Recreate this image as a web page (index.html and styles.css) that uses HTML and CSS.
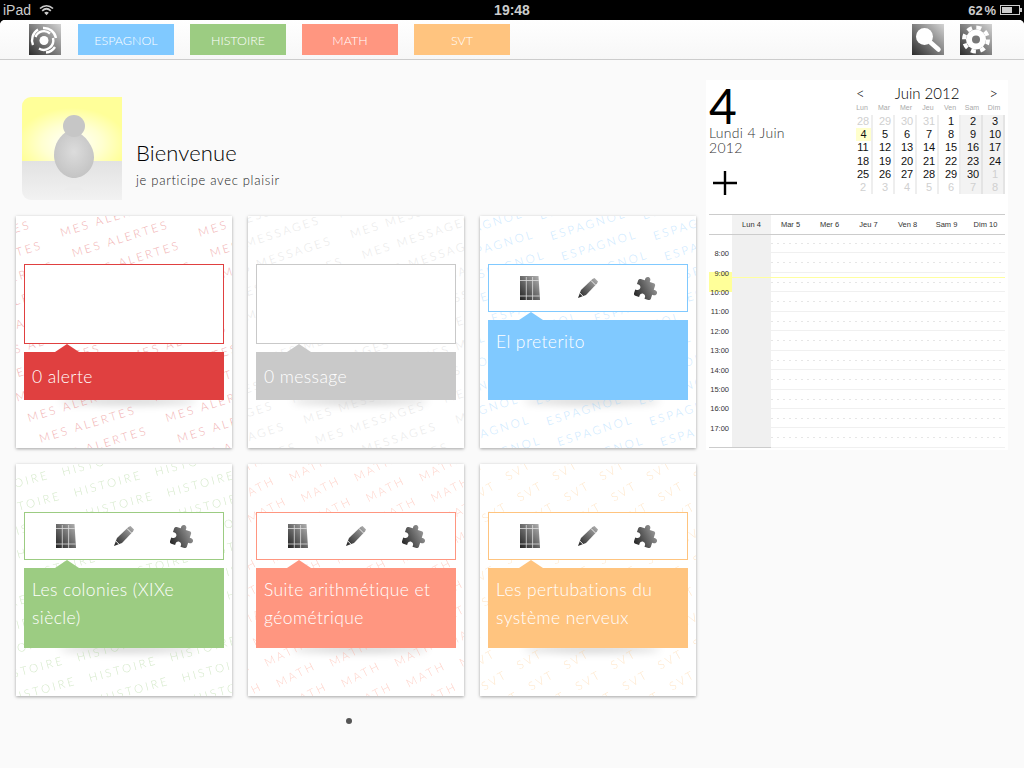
FILE: index.html
```html
<!doctype html>
<html lang="fr">
<head>
    <meta charset="UTF-8">
    <title>Bienvenue</title>
    <link rel="stylesheet" href="styles.css">
</head>
<body>
    <svg class="defs" width="0" height="0">
        <defs>
            <linearGradient id="dk" x1="0" y1="1" x2="1" y2="0">
                <stop offset="0" stop-color="#222"/>
                <stop offset="1" stop-color="#b4b4b4"/>
            </linearGradient>
            <symbol id="i-table" viewBox="0 0 20 24">
                <path d="M0 0H18.5L20 24H0Z" fill="url(#dk)"/>
                <path d="M0 4.5H18.8M0 20H19.7M6.3 1V24M12.6 1V24" stroke="#ddd" stroke-width=".8" fill="none"/>
            </symbol>
            <symbol id="i-pen" viewBox="0 0 20 20">
                <path d="M0 20L3 12L14.5 1L16.5 0L20 3.5L19 5.5L8 17Z" fill="url(#dk)"/>
                <path d="M13 2.5L17.5 7M1.8 15L5 18.2" stroke="#eee" stroke-width="1" fill="none"/>
            </symbol>
            <symbol id="i-puzzle" viewBox="0 0 24 24">
                <path transform="rotate(18 12 12)" d="M20.5 11H19V7c0-1.1-.9-2-2-2h-4V3.5C13 2.12 11.88 1 10.5 1S8 2.12 8 3.5V5H4c-1.1 0-1.99.9-1.99 2v3.8H3.5c1.49 0 2.7 1.21 2.7 2.7s-1.21 2.7-2.7 2.7H2V20c0 1.1.9 2 2 2h3.8v-1.5c0-1.49 1.21-2.7 2.7-2.7 1.49 0 2.7 1.21 2.7 2.7V22H17c1.1 0 2-.9 2-2v-4h1.5c1.38 0 2.5-1.12 2.5-2.5S21.88 11 20.5 11z" fill="url(#dk)"/>
            </symbol>
        </defs>
    </svg>

    <div class="status">
        <div class="status-left">
            <span>iPad</span>
            <svg width="15" height="12" viewBox="0 0 15 12"><path d="M1 4.5C5 .8 10 .8 14 4.5M3.2 6.8C5.8 4.3 9.2 4.3 11.8 6.8" fill="none" stroke="#ccc" stroke-width="1.7"/><path d="M5.2 8.8C6.5 7.5 8.5 7.5 9.8 8.8L7.5 11.3Z" fill="#ccc"/></svg>
        </div>
        <div class="status-time">19:48</div>
        <div class="status-right">
            <span>62 %</span>
            <div class="battery"><div class="battery-level"></div></div>
        </div>
    </div>

    <div class="screen">
        <div class="toolbar">
            <div class="tool">
                <svg width="32" height="31" viewBox="0 0 32 31"><circle cx="15" cy="16.5" r="4.5" fill="#fff"/><g fill="none" stroke="#fff" stroke-width="2.4"><path d="M6.5 13A9 9 0 0 1 21 9.5"/><path d="M24 14A9.5 9.5 0 0 1 10 24.5"/><path d="M4 21A12.5 12.5 0 0 1 9 5.5"/><path d="M14 4A12.5 12.5 0 0 1 27 14"/><path d="M26 23A12.5 12.5 0 0 1 17 28.5"/></g></svg>
            </div>
            <div class="tabs">
                <div class="tab espagnol">ESPAGNOL</div>
                <div class="tab histoire">HISTOIRE</div>
                <div class="tab math">MATH</div>
                <div class="tab svt">SVT</div>
            </div>
            <div class="tools-right">
                <div class="tool">
                    <svg width="32" height="31" viewBox="0 0 32 31"><circle cx="12.5" cy="12.5" r="8.5" fill="#fff"/><path d="M18 18L26.5 25.5" stroke="#fff" stroke-width="4.5" stroke-linecap="round"/></svg>
                </div>
                <div class="tool">
                    <svg width="32" height="31" viewBox="0 0 32 31"><circle cx="16" cy="15.5" r="10" fill="#fff"/><circle cx="16" cy="15.5" r="12" fill="none" stroke="#fff" stroke-width="4" stroke-dasharray="5 4.42"/><circle cx="16" cy="15.5" r="4" fill="#777"/></svg>
                </div>
            </div>
        </div>

        <div class="main">
            <div class="left">
                <div class="profile">
                    <div class="avatar">
                        <svg width="100" height="103" viewBox="0 0 100 103">
                            <defs>
                                <radialGradient id="glow" cx=".5" cy=".72" r=".55">
                                    <stop offset="0" stop-color="#fff"/>
                                    <stop offset=".55" stop-color="#ffffd0"/>
                                    <stop offset="1" stop-color="#ffff99"/>
                                </radialGradient>
                                <linearGradient id="floor" x1="0" y1="0" x2="0" y2="1">
                                    <stop offset="0" stop-color="#e2e2e2"/>
                                    <stop offset="1" stop-color="#f2f2f2"/>
                                </linearGradient>
                                <radialGradient id="egg" cx=".5" cy=".45" r=".6">
                                    <stop offset="0" stop-color="#dcdcdc"/>
                                    <stop offset="1" stop-color="#c2c2c2"/>
                                </radialGradient>
                            </defs>
                            <rect width="100" height="64" fill="url(#glow)"/>
                            <rect y="64" width="100" height="39" fill="url(#floor)"/>
                            <path d="M52 33C64 38 72 50 72 60C72 72 62 81 52 81C42 81 32 71 32 58C32 47 38 38 47 33Z" fill="url(#egg)"/>
                            <circle cx="52" cy="29" r="11" fill="#c6c6c6"/>
                            <path d="M42 93C46 90 50 86 52 86C54 86 58 90 62 93Z" fill="#ececec"/>
                        </svg>
                    </div>
                    <div class="hello">
                        <div class="hello-title">Bienvenue</div>
                        <div class="hello-sub">je participe avec plaisir</div>
                    </div>
                </div>

                <div class="cards">
                    <div class="card alerte">
                        <svg class="wm" data-word="MES ALERTES" data-angle="-17" data-ox="45.7" data-oy="20.7" data-ax="138" data-bx="11.7" data-by="20.6"></svg>
                        <div class="box box-tall"></div>
                        <div class="label label-short">0 alerte</div>
                    </div>
                    <div class="card message">
                        <svg class="wm" data-word="MES MESSAGES" data-angle="-18" data-ox="103.7" data-oy="22.3" data-ax="152" data-bx="11.7" data-by="20.6"></svg>
                        <div class="box box-tall"></div>
                        <div class="label label-short">0 message</div>
                    </div>
                    <div class="card espagnol">
                        <svg class="wm" data-word="ESPAGNOL" data-angle="-17" data-ox="71.7" data-oy="24" data-ax="103" data-bx="11" data-by="20.6"></svg>
                        <div class="box">
                            <svg class="ico" width="20" height="24"><use href="#i-table"/></svg>
                            <svg class="ico" width="20" height="20"><use href="#i-pen"/></svg>
                            <svg class="ico" width="25" height="25"><use href="#i-puzzle"/></svg>
                        </div>
                        <div class="label">El preterito</div>
                    </div>
                    <div class="card histoire">
                        <svg class="wm" data-word="HISTOIRE" data-angle="-15" data-ox="59" data-oy="32.7" data-ax="93" data-bx="12" data-by="20.6"></svg>
                        <div class="box">
                            <svg class="ico" width="20" height="24"><use href="#i-table"/></svg>
                            <svg class="ico" width="20" height="20"><use href="#i-pen"/></svg>
                            <svg class="ico" width="25" height="25"><use href="#i-puzzle"/></svg>
                        </div>
                        <div class="label">Les colonies (XIXe siècle)</div>
                    </div>
                    <div class="card math">
                        <svg class="wm" data-word="MATH" data-angle="-27" data-ox="43.7" data-oy="17.7" data-ax="65" data-bx="11.7" data-by="20.6"></svg>
                        <div class="box">
                            <svg class="ico" width="20" height="24"><use href="#i-table"/></svg>
                            <svg class="ico" width="20" height="20"><use href="#i-pen"/></svg>
                            <svg class="ico" width="25" height="25"><use href="#i-puzzle"/></svg>
                        </div>
                        <div class="label">Suite arithmétique et géométrique</div>
                    </div>
                    <div class="card svt">
                        <svg class="wm" data-word="SVT" data-angle="-30" data-ox="28.3" data-oy="16.7" data-ax="47" data-bx="11.7" data-by="21"></svg>
                        <div class="box">
                            <svg class="ico" width="20" height="24"><use href="#i-table"/></svg>
                            <svg class="ico" width="20" height="20"><use href="#i-pen"/></svg>
                            <svg class="ico" width="25" height="25"><use href="#i-puzzle"/></svg>
                        </div>
                        <div class="label">Les pertubations du système nerveux</div>
                    </div>
                </div>
                <div class="pager"><span class="pager-dot"></span></div>
            </div>

            <div class="agenda">
                <div class="agenda-top">
                    <div class="today-info">
                        <div class="today-num">4</div>
                        <div class="today-text">Lundi 4 Juin 2012</div>
                        <svg class="add" width="24" height="24" viewBox="0 0 24 24"><path d="M12 0V24M0 12H24" stroke="#000" stroke-width="2.4"/></svg>
                    </div>
                    <div class="mini">
                        <div class="mini-head"><span>&lt;</span><span class="mini-title">Juin 2012</span><span>&gt;</span></div>
                        <div class="mini-days">
                            <span>Lun</span><span>Mar</span><span>Mer</span><span>Jeu</span><span>Ven</span><span>Sam</span><span>Dim</span>
                        </div>
                        <div class="mini-grid">
                            <span class="off">28</span><span class="off">29</span><span class="off">30</span><span class="off">31</span><span>1</span><span>2</span><span>3</span>
                            <span class="now">4</span><span>5</span><span>6</span><span>7</span><span>8</span><span>9</span><span>10</span>
                            <span>11</span><span>12</span><span>13</span><span>14</span><span>15</span><span>16</span><span>17</span>
                            <span>18</span><span>19</span><span>20</span><span>21</span><span>22</span><span>23</span><span>24</span>
                            <span>25</span><span>26</span><span>27</span><span>28</span><span>29</span><span>30</span><span class="off">1</span>
                            <span class="off">2</span><span class="off">3</span><span class="off">4</span><span class="off">5</span><span class="off">6</span><span class="off">7</span><span class="off">8</span>
                        </div>
                    </div>
                </div>
                <div class="week">
                    <div class="week-head">
                        <div class="week-gap"></div>
                        <div class="week-day week-today">Lun 4</div>
                        <div class="week-day">Mar 5</div>
                        <div class="week-day">Mer 6</div>
                        <div class="week-day">Jeu 7</div>
                        <div class="week-day">Ven 8</div>
                        <div class="week-day">Sam 9</div>
                        <div class="week-day">Dim 10</div>
                    </div>
                    <div class="week-body">
                        <div class="now-block"></div>
                        <div class="now-line"></div>
                        <div class="times">
                            <div>8:00</div><div>9:00</div><div>10:00</div><div>11:00</div><div>12:00</div>
                            <div>13:00</div><div>14:00</div><div>15:00</div><div>16:00</div><div>17:00</div>
                        </div>
                        <div class="today-col"></div>
                        <div class="slots">
                            <div class="slot"></div><div class="slot"></div><div class="slot"></div><div class="slot"></div>
                            <div class="slot"></div><div class="slot"></div><div class="slot"></div><div class="slot"></div>
                            <div class="slot"></div><div class="slot"></div><div class="slot"></div>
                        </div>
                    </div>
                </div>
            </div>
        </div>
    </div>
    <script src="watermark.js"></script>
</body>
</html>
```
FILE: styles.css
```css
*{
    margin:0;
    padding:0;
    box-sizing:border-box;
}
html,body{
    width:1024px;
    height:768px;
    overflow:hidden;
    background:#000;
}
body{
    font-family:"Lato","Liberation Sans",sans-serif;
    color:#000;
}
.defs{
    position:absolute;
}
.espagnol{--c:#80c9ff;}
.histoire{--c:#9ccc82;}
.math{--c:#ff9680;}
.svt{--c:#ffc47f;}
.alerte{--c:#e04040;}
.message{--c:#c9c9c9;}

/* status bar */
.status{
    height:20px;
    display:grid;
    grid-template-columns:1fr auto 1fr;
    align-items:center;
    padding:0 3px;
    color:#ccc;
    font:bold 14px "Liberation Sans",sans-serif;
}
.status-left{
    display:flex;
    align-items:center;
    gap:8px;
    font-weight:normal;
}
.status-right{
    display:flex;
    align-items:center;
    justify-content:flex-end;
    gap:4px;
    padding-right:1px;
    font-size:13px;
    word-spacing:-2px;
}
.battery{
    width:20px;
    height:10px;
    border:1px solid #ccc;
    padding:1px;
    position:relative;
}
.battery::after{
    content:"";
    position:absolute;
    right:-3px;
    top:2px;
    width:2px;
    height:4px;
    background:#ccc;
}
.battery-level{
    width:62%;
    height:100%;
    background:#ccc;
}

/* toolbar */
.screen{
    height:748px;
    background:#fafafa;
    border-radius:5px 5px 0 0;
}
.toolbar{
    height:40px;
    display:flex;
    align-items:flex-start;
    padding:4px 32px 0 29px;
    border-bottom:1px solid #ccc;
    border-radius:5px 5px 0 0;
    background:linear-gradient(#fff,#f7f7f7);
}
.tool{
    width:32px;
    height:31px;
    background:linear-gradient(45deg,#2c2c2c,#d4d4d4);
}
.tool svg{
    display:block;
}
.tabs{
    display:flex;
    gap:16px;
    margin-left:17px;
}
.tab{
    width:96px;
    height:31px;
    line-height:34px;
    text-align:center;
    background:var(--c);
    color:#fff;
    font-size:12.5px;
    font-weight:300;
}
.tools-right{
    margin-left:auto;
    display:flex;
    gap:16px;
}

/* main */
.main{
    display:flex;
}
.left{
    width:696px;
    padding-left:16px;
}
.profile{
    display:flex;
    margin:37px 0 16px 6px;
}
.avatar{
    width:100px;
    height:103px;
    border-radius:9px 0 0 9px;
    overflow:hidden;
}
.avatar svg{
    display:block;
}
.hello{
    margin-left:14px;
    padding-top:42px;
}
.hello-title{
    font-size:22px;
    font-weight:300;
    line-height:28px;
    letter-spacing:.1px;
}
.hello-sub{
    font-size:13px;
    font-weight:300;
    line-height:16px;
    margin-top:5px;
    letter-spacing:.7px;
    color:#222;
}

/* cards */
.cards{
    display:grid;
    grid-template-columns:repeat(3,216px);
    grid-auto-rows:232px;
    gap:16px;
}
.card{
    position:relative;
    isolation:isolate;
    overflow:hidden;
    background:#fff;
    padding:48px 8px 0;
    box-shadow:0 1px 3px rgba(0,0,0,.35);
}
.wm{
    position:absolute;
    left:0;
    top:0;
    width:216px;
    height:232px;
    fill:var(--c);
    opacity:.42;
    font-size:11.5px;
    font-weight:300;
    letter-spacing:2.6px;
}
.box{
    position:relative;
    height:48px;
    background:#fff;
    border:1px solid var(--c);
    display:flex;
    align-items:center;
    padding-left:31px;
}
.box-tall{
    height:80px;
}
.ico:nth-child(1){
    margin-right:38px;
}
.ico:nth-child(2){
    margin-right:36px;
}
.label{
    position:relative;
    height:80px;
    margin-top:8px;
    padding:8px;
    background:var(--c);
    color:#fff;
    font-size:17.5px;
    font-weight:300;
    line-height:28px;
    letter-spacing:.4px;
}
.label-short{
    height:48px;
    padding-top:11px;
}
.label::before{
    content:"";
    position:absolute;
    left:31px;
    top:-8px;
    border-left:12px solid transparent;
    border-right:12px solid transparent;
    border-bottom:8px solid var(--c);
}
.label::after{
    content:"";
    position:absolute;
    z-index:-1;
    left:36px;
    right:28px;
    bottom:2px;
    height:6px;
    border-radius:50%;
    box-shadow:0 6px 8px rgba(0,0,0,.22);
}
.pager{
    display:flex;
    justify-content:center;
    width:666px;
    margin-top:22px;
}
.pager-dot{
    width:6px;
    height:6px;
    border-radius:50%;
    background:#555;
}

/* agenda */
.agenda{
    width:302px;
    height:370px;
    margin:20px 0 0 10px;
    background:#fff;
}
.agenda-top{
    display:flex;
    height:134px;
    padding-left:3px;
}
.today-info{
    width:142px;
}
.today-num{
    font-size:48px;
    font-weight:400;
    line-height:39px;
    margin-top:6px;
    height:39px;
}
.today-text{
    width:90px;
    font-size:14px;
    font-weight:300;
    line-height:15px;
    letter-spacing:.3px;
    color:#333;
}
.add{
    display:block;
    margin:16px 0 0 4px;
}
.mini{
    width:154px;
}
.mini-head{
    display:flex;
    justify-content:space-between;
    padding:3px 7px 0 5px;
    height:21px;
    font-size:15px;
    font-weight:300;
    line-height:20px;
}
.mini-days{
    display:grid;
    grid-template-columns:repeat(7,22px);
    height:14px;
    text-align:center;
    font:7px/14px "Liberation Sans",sans-serif;
    color:#aaa;
}
.mini-grid{
    display:grid;
    grid-template-columns:repeat(7,22px);
    grid-auto-rows:13.2px;
    font:11px/13.2px "Liberation Sans",sans-serif;
    text-align:center;
    color:#111;
}
.mini-grid span{
    padding-left:4px;
    border-right:2px solid #eee;
}
.mini-grid span:nth-child(7n),.mini-grid span:nth-child(7n-1){
    background:#f3f3f3;
    border-right-color:#e4e4e4;
}
.mini-grid .off{
    color:#d0d0d0;
}
.mini-grid .now{
    padding-left:0;
    margin-left:5px;
    background:#ffffcc;
}

/* week */
.week{
    width:296px;
    margin-left:3px;
    font-family:"Liberation Sans",sans-serif;
    font-size:7.5px;
    color:#333;
}
.week-head{
    display:flex;
    height:21px;
    border-top:1px solid #ccc;
    border-bottom:1px solid #ccc;
}
.week-gap{
    width:23px;
}
.week-day{
    width:39px;
    line-height:19px;
    text-align:center;
}
.week-today{
    background:#f2f2f2;
}
.week-body{
    position:relative;
    display:flex;
    height:213px;
    border-bottom:1px solid #ccc;
}
.times{
    position:relative;
    width:23px;
    padding:9.2px 3px 0 0;
    text-align:right;
}
.times div{
    height:19.4px;
    line-height:19.4px;
}
.today-col{
    width:39px;
    background:#f0f0f0;
}
.slots{
    flex:1;
    margin-top:-1px;
}
.slot{
    height:19.45px;
    border-bottom:1px solid #f0f0f0;
    padding-top:9px;
}
.slot::before{
    content:"";
    display:block;
    height:1px;
    background:repeating-linear-gradient(to right,#e6e6e6 0 2px,transparent 2px 6px);
}
.now-block{
    position:absolute;
    left:0;
    top:37px;
    width:23px;
    height:20px;
    background:#ffff99;
}
.now-line{
    position:absolute;
    z-index:1;
    left:23px;
    right:0;
    top:42px;
    height:1px;
    background:#ffffa0;
}
```
FILE: watermark.js
```javascript
// fills each card's background with its subject name, slanted, on a lattice
var NS='http://www.w3.org/2000/svg';
var aWm=document.querySelectorAll('.wm');
for(var n=0;n<aWm.length;n++){
    var d=aWm[n].dataset;
    for(var row=-14;row<14;row++){
        var y=+d.oy+row*d.by;
        if(y<-10||y>270) continue;
        for(var col=-8;col<8;col++){
            var x=+d.ox+row*d.bx+col*d.ax;
            if(x<-170||x>230) continue;
            var t=document.createElementNS(NS,'text');
            t.setAttribute('transform','translate('+x+' '+y+') rotate('+d.angle+')');
            t.textContent=d.word;
            aWm[n].appendChild(t);
        }
    }
}
```
